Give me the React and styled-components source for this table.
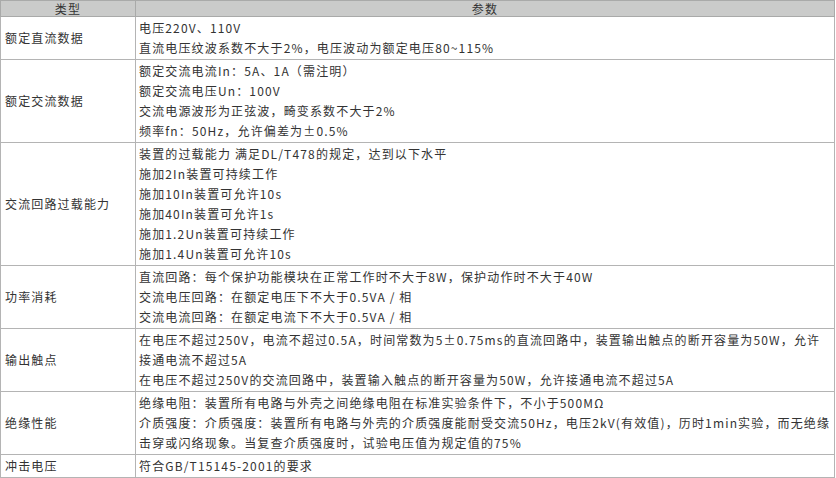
import React from "react";
import styled, { createGlobalStyle } from "styled-components";

const Global = createGlobalStyle`
  html, body { margin: 0; padding: 0; background: #ffffff; }
  body { font-family: "Noto Sans CJK SC", "Noto Sans", sans-serif; }
`;

const Table = styled.table`
  width: 835px;
  border-collapse: collapse;
  table-layout: fixed;
  font-size: 12px;
  color: #333333;
  letter-spacing: 1.15px;
`;

const HeadCell = styled.th`
  height: 15px;
  padding: 0;
  background: #cacbca;
  border: 1px solid #a9aaa9;
  font-weight: normal;
  line-height: 15px;
  text-align: center;
  color: #333333;
  width: ${(p) => (p.$w ? `${p.$w}px` : "auto")};
`;

const TypeCell = styled.td`
  border: 1px solid #b4b4b4;
  padding: 0 4px;
  vertical-align: middle;
  line-height: 20px;
`;

const ParamCell = styled.td`
  border: 1px solid #b4b4b4;
  padding: 1px 3px 1px 3px;
  vertical-align: top;
  line-height: 20px;
`;

const Line = styled.div`
  white-space: normal;
`;

const rows = [
  {
    type: "额定直流数据",
    lines: ["电压220V、110V", "直流电压纹波系数不大于2%，电压波动为额定电压80~115%"],
  },
  {
    type: "额定交流数据",
    lines: [
      "额定交流电流In：5A、1A（需注明）",
      "额定交流电压Un：100V",
      "交流电源波形为正弦波，畸变系数不大于2%",
      "频率fn：50Hz，允许偏差为±0.5%",
    ],
  },
  {
    type: "交流回路过载能力",
    lines: [
      "装置的过载能力 满足DL/T478的规定，达到以下水平",
      "施加2In装置可持续工作",
      "施加10In装置可允许10s",
      "施加40In装置可允许1s",
      "施加1.2Un装置可持续工作",
      "施加1.4Un装置可允许10s",
    ],
  },
  {
    type: "功率消耗",
    lines: [
      "直流回路：每个保护功能模块在正常工作时不大于8W，保护动作时不大于40W",
      "交流电压回路：在额定电压下不大于0.5VA / 相",
      "交流电流回路：在额定电流下不大于0.5VA / 相",
    ],
  },
  {
    type: "输出触点",
    lines: [
      "在电压不超过250V，电流不超过0.5A，时间常数为5±0.75ms的直流回路中，装置输出触点的断开容量为50W，允许接通电流不超过5A",
      "在电压不超过250V的交流回路中，装置输入触点的断开容量为50W，允许接通电流不超过5A",
    ],
  },
  {
    type: "绝缘性能",
    lines: [
      "绝缘电阻：装置所有电路与外壳之间绝缘电阻在标准实验条件下，不小于500MΩ",
      "介质强度：介质强度：装置所有电路与外壳的介质强度能耐受交流50Hz，电压2kV(有效值)，历时1min实验，而无绝缘击穿或闪络现象。当复查介质强度时，试验电压值为规定值的75%",
    ],
  },
  {
    type: "冲击电压",
    lines: ["符合GB/T15145-2001的要求"],
  },
];

export default function App() {
  return (
    <>
      <Global />
      <Table>
        <thead>
          <tr>
            <HeadCell $w={134}>类型</HeadCell>
            <HeadCell>参数</HeadCell>
          </tr>
        </thead>
        <tbody>
          {rows.map((r) => (
            <tr key={r.type}>
              <TypeCell>{r.type}</TypeCell>
              <ParamCell>
                {r.lines.map((l, i) => (
                  <Line key={i}>{l}</Line>
                ))}
              </ParamCell>
            </tr>
          ))}
        </tbody>
      </Table>
    </>
  );
}
